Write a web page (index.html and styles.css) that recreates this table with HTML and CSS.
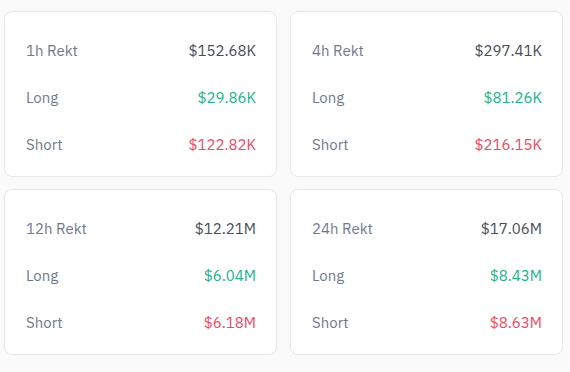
FILE: index.html
```html
<!DOCTYPE html>
<html>
<head>
<meta charset="utf-8">
<link rel="stylesheet" href="styles.css">
</head>
<body>
<div class="grid">
  <div class="card">
    <div class="row"><span class="label">1h Rekt</span><span class="value">$152.68K</span></div>
    <div class="row"><span class="label">Long</span><span class="value up">$29.86K</span></div>
    <div class="row"><span class="label">Short</span><span class="value down">$122.82K</span></div>
  </div>
  <div class="card">
    <div class="row"><span class="label">4h Rekt</span><span class="value">$297.41K</span></div>
    <div class="row"><span class="label">Long</span><span class="value up">$81.26K</span></div>
    <div class="row"><span class="label">Short</span><span class="value down">$216.15K</span></div>
  </div>
  <div class="card">
    <div class="row"><span class="label">12h Rekt</span><span class="value">$12.21M</span></div>
    <div class="row"><span class="label">Long</span><span class="value up">$6.04M</span></div>
    <div class="row"><span class="label">Short</span><span class="value down">$6.18M</span></div>
  </div>
  <div class="card">
    <div class="row"><span class="label">24h Rekt</span><span class="value">$17.06M</span></div>
    <div class="row"><span class="label">Long</span><span class="value up">$8.43M</span></div>
    <div class="row"><span class="label">Short</span><span class="value down">$8.63M</span></div>
  </div>
</div>
</body>
</html>
```
FILE: styles.css
```css
html, body {
  margin: 0;
  background: #fafafa;
}
body {
  padding: 11px 7px 0 4px;
  font-family: "IBM Plex Sans", Inter, "Noto Sans", sans-serif;
  font-size: 15px;
  font-weight: 400;
}
.grid {
  display: grid;
  grid-template-columns: 273px 273px;
  grid-auto-rows: 166px;
  column-gap: 13px;
  row-gap: 12px;
}
.card {
  box-sizing: border-box;
  background: #ffffff;
  border: 1px solid #e6e8ea;
  border-radius: 8px;
  padding: 24px 20px 17px 21px;
  display: flex;
  flex-direction: column;
  gap: 17px;
}
.row {
  display: flex;
  justify-content: space-between;
  align-items: center;
  height: 30px;
  line-height: 30px;
}
.label {
  color: #707a8a;
}
.value {
  color: #474d57;
}
.value.up {
  color: #20b28a;
}
.value.down {
  color: #f6465d;
}
```
